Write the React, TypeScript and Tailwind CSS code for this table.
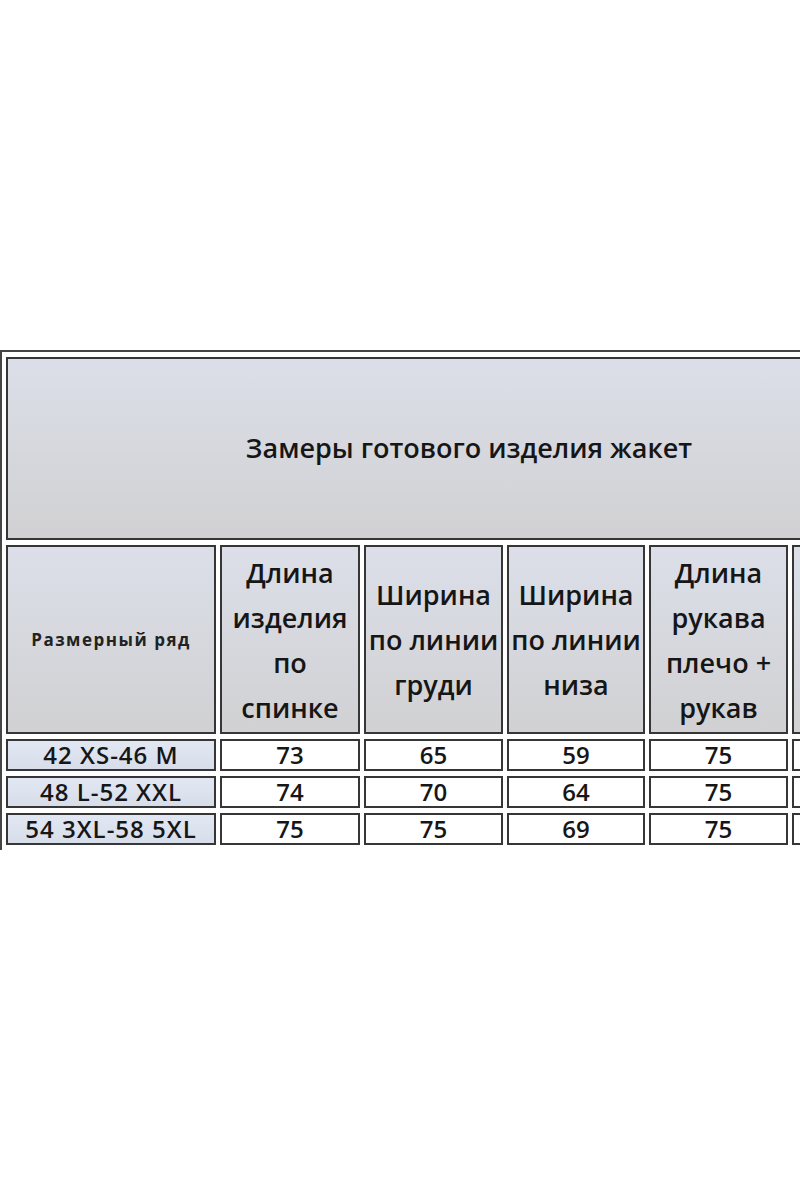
import React from "react";

const heads: string[][] = [
  ["Длина", "изделия", "по", "спинке"],
  ["Ширина", "по линии", "груди"],
  ["Ширина", "по линии", "низа"],
  ["Длина", "рукава", "плечо +", "рукав"],
];

const rows: { size: string; vals: string[] }[] = [
  { size: "42 XS-46 M", vals: ["73", "65", "59", "75"] },
  { size: "48 L-52 XXL", vals: ["74", "70", "64", "75"] },
  { size: "54 3XL-58 5XL", vals: ["75", "75", "69", "75"] },
];

const widths = [210, 140, 139, 138, 139, 140];

const grey = "border-2 border-[#363636] bg-gradient-to-b from-[#dcdfe9] to-[#d1d1d3]";
const cell = "h-[32px] border-2 border-[#363636] p-0 text-center";

export default function App() {
  return (
    <div
      className="h-[1200px] w-[800px] overflow-hidden bg-white text-[#161616]"
      style={{ fontFamily: '"Open Sans", "Noto Sans", sans-serif' }}
    >
      <table className="mt-[350px] w-[934px] table-fixed border-separate border-spacing-x-[4px] border-spacing-y-[5px] border-l-2 border-t-2 border-[#444]">
        <colgroup>
          {widths.map((w, i) => (
            <col key={i} style={{ width: w }} />
          ))}
        </colgroup>
        <tbody>
          <tr>
            <td colSpan={6} className={`${grey} h-[183px] p-0 text-center text-[27px] font-semibold`}>
              Замеры готового изделия жакет
            </td>
          </tr>
          <tr>
            <td className={`${grey} h-[189px] p-0 text-center text-[17px] font-bold tracking-[1.5px] whitespace-nowrap text-[#222]`}>
              Размерный ряд
            </td>
            {heads.map((h, i) => (
              <td key={i} className={`${grey} p-0 text-center align-middle`}>
                <div className="text-[27px] font-semibold leading-[45px] whitespace-nowrap">
                  {h.map((l, j) => (
                    <div key={j}>{l}</div>
                  ))}
                </div>
              </td>
            ))}
            <td className={`${grey} p-0`} />
          </tr>
          {rows.map((r) => (
            <tr key={r.size}>
              <td className={`${cell} bg-gradient-to-b from-[#e2e7f4] to-[#d8ddea] text-[24px] font-semibold leading-none tracking-[1px] whitespace-nowrap`}>
                {r.size}
              </td>
              {r.vals.map((v, i) => (
                <td key={i} className={`${cell} bg-white text-[24px] font-semibold leading-none`}>
                  {v}
                </td>
              ))}
              <td className={`${cell} bg-white`} />
            </tr>
          ))}
        </tbody>
      </table>
    </div>
  );
}
